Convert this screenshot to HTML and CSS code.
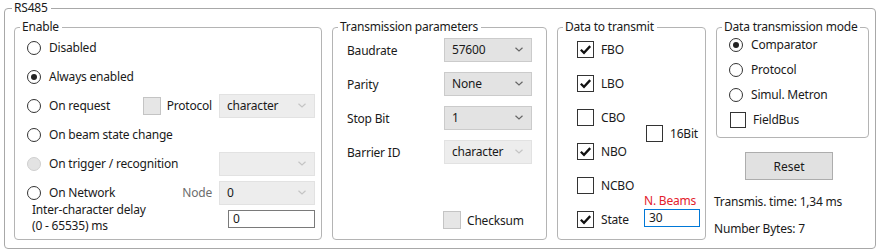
FILE: index.html
```html
<!DOCTYPE html>
<html lang="en">
<head>
  <meta charset="UTF-8" />
  <title>RS485</title>
  <link rel="stylesheet" href="styles.css">
</head>
<body>
  <fieldset class="group outer">
    <legend>RS485</legend>
    <div class="row">

      <fieldset class="group enable">
        <legend>Enable</legend>
        <div class="opts">
          <div class="opt"><span class="radio"></span>Disabled</div>
          <div class="opt"><span class="radio on"></span>Always enabled</div>
          <div class="opt"><span class="radio"></span>On request
            <div class="extra">
              <span class="check off"></span><span class="extra-label">Protocol</span>
              <div class="combo off">character<svg viewBox="0 0 8 5"><path d="M0.5 0.8 L4 4 L7.5 0.8"/></svg></div>
            </div>
          </div>
          <div class="opt"><span class="radio"></span>On beam state change</div>
          <div class="opt"><span class="radio off"></span>On trigger / recognition
            <div class="extra">
              <div class="combo off"><svg viewBox="0 0 8 5"><path d="M0.5 0.8 L4 4 L7.5 0.8"/></svg></div>
            </div>
          </div>
          <div class="opt"><span class="radio"></span>On Network
            <div class="extra">
              <span class="muted">Node</span>
              <div class="combo off">0<svg viewBox="0 0 8 5"><path d="M0.5 0.8 L4 4 L7.5 0.8"/></svg></div>
            </div>
          </div>
          <div class="delay">
            <div class="delay-label">Inter-character delay<br>(0 - 65535) ms</div>
            <div class="field delay-field">0</div>
          </div>
        </div>
      </fieldset>

      <fieldset class="group params">
        <legend>Transmission parameters</legend>
        <div class="param"><span class="param-label">Baudrate</span>
          <div class="combo">57600<svg viewBox="0 0 8 5"><path d="M0.5 0.8 L4 4 L7.5 0.8"/></svg></div></div>
        <div class="param"><span class="param-label">Parity</span>
          <div class="combo">None<svg viewBox="0 0 8 5"><path d="M0.5 0.8 L4 4 L7.5 0.8"/></svg></div></div>
        <div class="param"><span class="param-label">Stop Bit</span>
          <div class="combo">1<svg viewBox="0 0 8 5"><path d="M0.5 0.8 L4 4 L7.5 0.8"/></svg></div></div>
        <div class="param"><span class="param-label">Barrier ID</span>
          <div class="combo off">character<svg viewBox="0 0 8 5"><path d="M0.5 0.8 L4 4 L7.5 0.8"/></svg></div></div>
        <div class="checksum"><span class="check off"></span>Checksum</div>
      </fieldset>

      <fieldset class="group data">
        <legend>Data to transmit</legend>
        <div class="data-grid">
          <div class="item r1"><span class="check"><svg viewBox="0 0 16 16"><path d="M3 8.2 L6.4 11.6 L13 4.4"/></svg></span>FBO</div>
          <div class="item r2"><span class="check"><svg viewBox="0 0 16 16"><path d="M3 8.2 L6.4 11.6 L13 4.4"/></svg></span>LBO</div>
          <div class="item r3"><span class="check"></span>CBO</div>
          <div class="item r4"><span class="check"><svg viewBox="0 0 16 16"><path d="M3 8.2 L6.4 11.6 L13 4.4"/></svg></span>NBO</div>
          <div class="item r5"><span class="check"></span>NCBO</div>
          <div class="item r6"><span class="check"><svg viewBox="0 0 16 16"><path d="M3 8.2 L6.4 11.6 L13 4.4"/></svg></span>State</div>
          <div class="item bits"><span class="check"></span>16Bit</div>
          <div class="beams">
            <span class="beams-label">N. Beams</span>
            <div class="field beams-field">30</div>
          </div>
        </div>
      </fieldset>

      <div class="side">
        <fieldset class="group mode">
          <legend>Data transmission mode</legend>
          <div class="opts">
            <div class="opt"><span class="radio on"></span>Comparator</div>
            <div class="opt"><span class="radio"></span>Protocol</div>
            <div class="opt"><span class="radio"></span>Simul. Metron</div>
            <div class="opt"><span class="check"></span>FieldBus</div>
          </div>
        </fieldset>
        <button class="reset">Reset</button>
        <p class="info">Transmis. time: 1,34 ms</p>
        <p class="info bytes">Number Bytes: 7</p>
      </div>

    </div>
  </fieldset>
</body>
</html>
```

FILE: styles.css
```css
body {
  margin: 0;
  font-family: "Noto Sans", sans-serif;
  font-size: 12px;
  letter-spacing: -0.2px;
  color: #1a1a1a;
  background: #fff;
}
.group {
  border: 1px solid #b4b4b4;
  border-radius: 4px;
  margin: 0;
  padding: 0;
  box-sizing: border-box;
  min-width: 0;
}
.group > legend {
  padding: 0 3px 0 2px;
  line-height: 14px;
  white-space: nowrap;
}
.outer {
  margin: 1px 5px 0 4px;
  padding: 5px 5px 8px 9px;
  border-color: #a8a8a8;
}
.outer > legend {
  margin-left: -2px;
}
.row {
  display: flex;
  gap: 10px;
  height: 220px;
}

/* shared controls */
.opts {
  margin-top: -1px;
}
.opt {
  display: flex;
  align-items: center;
  height: 29px;
  white-space: nowrap;
}
.radio {
  width: 14px;
  height: 14px;
  border: 1px solid #333;
  border-radius: 50%;
  box-sizing: border-box;
  margin-right: 8px;
  display: grid;
  place-items: center;
  flex: none;
  background: #fff;
}
.radio.on::after {
  content: "";
  width: 6px;
  height: 6px;
  border-radius: 50%;
  background: #222;
}
.radio.off {
  background: #e3e3e3;
  border-color: #cfcfcf;
}
.check {
  width: 17px;
  height: 17px;
  border: 1px solid #333;
  box-sizing: border-box;
  background: #fff;
  display: grid;
  place-items: center;
  flex: none;
}
.check svg {
  width: 15px;
  height: 15px;
  fill: none;
  stroke: #111;
  stroke-width: 2.4;
}
.check.off {
  background: #e6e6e6;
  border-color: #c4c4c4;
  width: 18px;
  height: 18px;
}
.combo {
  display: flex;
  align-items: center;
  justify-content: space-between;
  box-sizing: border-box;
  height: 24px;
  padding: 0 8px 1px 7px;
  background: #e3e3e3;
  border: 1px solid #cbcbcb;
  color: #1a1a1a;
}
.combo svg {
  width: 8px;
  height: 5px;
  fill: none;
  stroke: #666;
  stroke-width: 1.2;
  margin-left: auto;
}
.combo.off {
  background: #ededed;
  border-color: #e2e2e2;
}
.combo.off svg {
  stroke: #c4c4c4;
}
.field {
  box-sizing: border-box;
  height: 18px;
  border: 1px solid #7a7a7a;
  padding: 0 4px;
  line-height: 15px;
  background: #fff;
}
.muted {
  color: #6d6d6d;
}

/* Enable */
.enable {
  width: 308px;
  padding: 0 6px 0 12px;
}
.enable > legend {
  margin-left: -7px;
}
.extra {
  margin-left: auto;
  display: flex;
  align-items: center;
  gap: 7px;
}
.extra-label {
  margin-left: -1px;
}
.extra .combo {
  width: 96px;
}
.delay {
  display: flex;
  align-items: center;
  margin-top: -5px;
  padding-left: 5px;
}
.delay-label {
  line-height: 16px;
}
.delay-field {
  margin-left: auto;
  margin-top: 2px;
  width: 87px;
}

/* Transmission parameters */
.params {
  width: 215px;
  padding: 4px 14px 10px 14px;
  display: flex;
  flex-direction: column;
}
.params > legend {
  margin-left: -9px;
}
.param {
  display: flex;
  align-items: center;
  margin-bottom: 10px;
}
.param-label {
  width: 97px;
}
.param .combo {
  width: 88px;
}
.checksum {
  margin-top: auto;
  margin-left: 96px;
  display: flex;
  align-items: center;
  gap: 6px;
  height: 18px;
}

/* Data to transmit */
.data {
  width: 149px;
  padding: 0 6px 0 19px;
}
.data > legend {
  margin-left: -14px;
}
.data-grid {
  display: grid;
  grid-template-columns: 67px 55px;
  grid-template-rows: repeat(6, 34px);
  margin-top: -2px;
}
.item {
  display: flex;
  align-items: center;
  gap: 7px;
  grid-column: 1;
}
.r1 { grid-row: 1; }
.r2 { grid-row: 2; }
.r3 { grid-row: 3; }
.r4 { grid-row: 4; }
.r5 { grid-row: 5; }
.r6 { grid-row: 6; }
.bits {
  grid-column: 2;
  grid-row: 3 / 5;
  margin-left: 2px;
  margin-top: -1px;
}
.beams {
  grid-column: 2;
  grid-row: 5 / 7;
  align-self: end;
  margin-bottom: 9px;
  display: flex;
  flex-direction: column;
}
.beams-label {
  color: #e3202c;
  line-height: 16px;
}
.beams-field {
  width: 56px;
  border-color: #0078d7;
}

/* Side column */
.side {
  width: 153px;
  display: flex;
  flex-direction: column;
}
.mode {
  padding: 0 6px 5px 12px;
}
.mode > legend {
  margin-left: -7px;
  padding-right: 2px;
}
.mode .opts {
  margin-top: -2px;
}
.mode .opt {
  height: 25px;
}
.mode .check {
  width: 16px;
  height: 16px;
  margin-right: 7px;
  margin-left: 1px;
}
.reset {
  margin: 14px 0 0 29px;
  width: 88px;
  height: 28px;
  background: #e1e1e1;
  border: 1px solid #adadad;
  font: inherit;
  color: #1a1a1a;
  padding: 0;
}
.info {
  margin: 14px 0 0 -2px;
  line-height: 16px;
  white-space: nowrap;
}
.info.bytes {
  margin-top: 11px;
}
```
